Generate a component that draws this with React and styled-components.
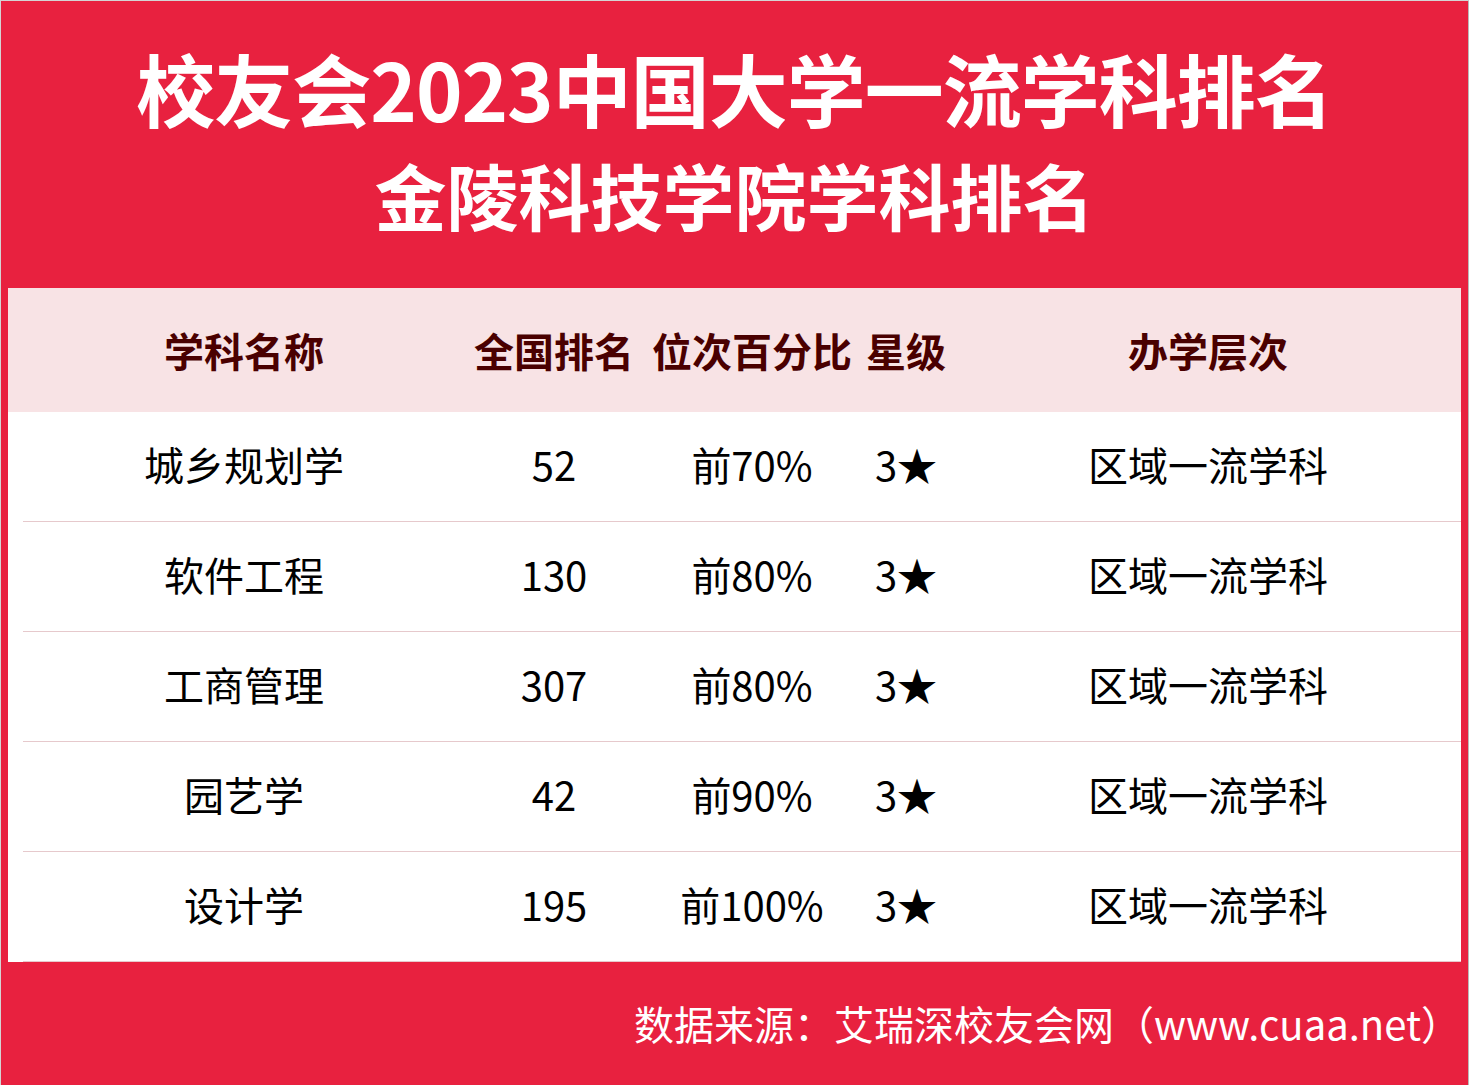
import styled, { createGlobalStyle } from 'styled-components'

const GlobalStyle = createGlobalStyle`
  html, body {
    margin: 0;
    padding: 0;
    background: #e8213f;
  }
  * { box-sizing: border-box; }
`

const rows = [
  { name: '城乡规划学', rank: '52', pct: '前70%', star: '3★', level: '区域一流学科' },
  { name: '软件工程', rank: '130', pct: '前80%', star: '3★', level: '区域一流学科' },
  { name: '工商管理', rank: '307', pct: '前80%', star: '3★', level: '区域一流学科' },
  { name: '园艺学', rank: '42', pct: '前90%', star: '3★', level: '区域一流学科' },
  { name: '设计学', rank: '195', pct: '前100%', star: '3★', level: '区域一流学科' },
]

const headers = ['学科名称', '全国排名', '位次百分比', '星级', '办学层次']

export default function App() {
  return (
    <>
      <GlobalStyle />
      <Page>
        <Title>
          <TitleLine size={79} $spacing={-1}>校友会2023中国大学一流学科排名</TitleLine>
          <TitleLine size={72} $spacing={0}>金陵科技学院学科排名</TitleLine>
        </Title>

        <Table>
          <HeadRow>
            {headers.map((h, i) => (
              <Cell key={h} $col={i}>{h}</Cell>
            ))}
          </HeadRow>
          {rows.map(r => (
            <Row key={r.name}>
              <Cell $col={0}>{r.name}</Cell>
              <Cell $col={1}>{r.rank}</Cell>
              <Cell $col={2}>{r.pct}</Cell>
              <Cell $col={3}>{r.star}</Cell>
              <Cell $col={4}>{r.level}</Cell>
            </Row>
          ))}
        </Table>

        <Footer>数据来源：艾瑞深校友会网（www.cuaa.net）</Footer>
      </Page>
    </>
  )
}

const Page = styled.div`
width: 1469px;
height: 1085px;
background: #e8213f;
border-top: 1px solid #d4d4d4;
border-left: 1px solid #d4d4d4;
border-right: 1px solid #b9b9b9;
padding: 0 7px 0 7px;
display: flex;
flex-direction: column;
font-family: "Noto Sans CJK SC", "Noto Sans", sans-serif;
overflow: hidden;
`

const Title = styled.div`
height: 287px;
padding-top: 34px;
display: flex;
flex-direction: column;
align-items: center;
color: #fff;
font-weight: 700;
`

const TitleLine = styled.div`
font-size: ${p => p.size}px;
line-height: 106px;
white-space: nowrap;
letter-spacing: ${p => p.$spacing}px;
`

const Table = styled.div`
width: 1453px;
display: flex;
flex-direction: column;
`

const columns = '472px 148px 248px 60px 525px'

const HeadRow = styled.div`
height: 124px;
display: grid;
grid-template-columns: ${columns};
align-items: center;
background: #f8e3e5;
color: #4a0000;
font-size: 40px;
font-weight: 700;
`

const Row = styled.div`
height: 110px;
padding-bottom: 6px;
display: grid;
grid-template-columns: ${columns};
align-items: center;
color: #000;
font-size: 40px;
background: linear-gradient(#e6c9cc, #e6c9cc) 15px 100% / calc(100% - 15px) 1px no-repeat, #fff;
`

const Cell = styled.div`
display: flex;
justify-content: center;
white-space: nowrap;
line-height: 1;
padding-left: ${p => (p.$col === 4 ? '19px' : '0')};
`

const Footer = styled.div`
flex: 1;
display: flex;
align-items: center;
justify-content: flex-end;
padding-bottom: 2px;
color: #fff;
font-size: 40px;
white-space: nowrap;
`
